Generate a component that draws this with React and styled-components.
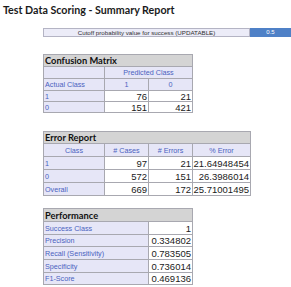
import React from 'react';
import styled, { createGlobalStyle } from 'styled-components';

const GlobalStyle = createGlobalStyle`
    body {
        margin: 0;
        background: #ffffff;
        font-family: Lato, 'Liberation Sans', sans-serif;
    }
`;

const report = {
    cutoff: 0.5,
    confusion: [
        ['1', 76, 21],
        ['0', 151, 421],
    ],
    errors: [
        ['1', 97, 21, '21.64948454'],
        ['0', 572, 151, '26.3986014'],
        ['Overall', 669, 172, '25.71001495'],
    ],
    performance: [
        ['Success Class', '1'],
        ['Precision', '0.334802'],
        ['Recall (Sensitivity)', '0.783505'],
        ['Specificity', '0.736014'],
        ['F1-Score', '0.469136'],
    ],
};

const App = () => {
    return (
        <Page>
            <GlobalStyle />
            <Title>Test Data Scoring - Summary Report</Title>
            <Body>
                <CutoffBar>
                    <CutoffLabel>Cutoff probability value for success (UPDATABLE)</CutoffLabel>
                    <CutoffValue>{report.cutoff}</CutoffValue>
                </CutoffBar>

                <Grid $top={17} $cols="61px 44px 44px" $rows="12px 12px 12px 11px 11px">
                    <Caption>Confusion Matrix</Caption>
                    <Label />
                    <ColHead $span={2}>Predicted Class</ColHead>
                    <Label>Actual Class</Label>
                    <ColHead>1</ColHead>
                    <ColHead>0</ColHead>
                    {report.confusion.map((r) => (
                        <React.Fragment key={r[0]}>
                            <Label>{r[0]}</Label>
                            <Value>{r[1]}</Value>
                            <Value>{r[2]}</Value>
                        </React.Fragment>
                    ))}
                </Grid>

                <Grid $top={18} $cols="61px 44px 44px 58px" $rows="12px 13px 13px 13px 13px">
                    <Caption>Error Report</Caption>
                    <ColHead>Class</ColHead>
                    <ColHead># Cases</ColHead>
                    <ColHead># Errors</ColHead>
                    <ColHead>% Error</ColHead>
                    {report.errors.map((r) => (
                        <React.Fragment key={r[0]}>
                            <Label>{r[0]}</Label>
                            <Value>{r[1]}</Value>
                            <Value>{r[2]}</Value>
                            <Value>{r[3]}</Value>
                        </React.Fragment>
                    ))}
                </Grid>

                <Grid $top={12} $cols="105px 44px" $rows="13px 13px 12px 13px 13px 12px">
                    <Caption>Performance</Caption>
                    {report.performance.map((r) => (
                        <React.Fragment key={r[0]}>
                            <Label>{r[0]}</Label>
                            <Value>{r[1]}</Value>
                        </React.Fragment>
                    ))}
                </Grid>
            </Body>
        </Page>
    );
};

const Page = styled.div`
    width: 291px;
    height: 287px;
    padding: 3px 0 0 3px;
    box-sizing: border-box;
    overflow: hidden;
`;

const Title = styled.div`
    font-family: Lato, 'Liberation Sans', sans-serif;
    font-weight: 700;
    font-size: 10.7px;
    line-height: 13px;
    color: #1a1a1a;
`;

const Body = styled.div`
    display: flex;
    flex-direction: column;
    align-items: flex-start;
    margin: 12px 0 0 40px;
`;

const CutoffBar = styled.div`
    display: flex;
    height: 9px;
    width: 248px;
`;

const CutoffLabel = styled.div`
    width: 207px;
    box-sizing: border-box;
    border: 1px solid #b4b4c4;
    background: #ececf8;
    font-family: 'Liberation Sans', sans-serif;
    font-size: 6.2px;
    line-height: 7px;
    text-align: center;
    color: #303030;
`;

const CutoffValue = styled.div`
    flex: 1;
    background: #4f81c7;
    color: #ffffff;
    font-family: 'Liberation Sans', sans-serif;
    font-size: 6px;
    line-height: 9px;
    text-align: center;
`;

const Grid = styled.div`
    display: grid;
    margin-top: ${(p) => p.$top}px;
    grid-template-columns: ${(p) => p.$cols};
    grid-template-rows: ${(p) => p.$rows};
    border-top: 1px solid #a8a8b0;
    border-left: 1px solid #a8a8b0;
    font-family: 'Liberation Sans', sans-serif;
`;

const Cell = styled.div`
    display: flex;
    align-items: center;
    box-sizing: border-box;
    border-right: 1px solid #a8a8b0;
    border-bottom: 1px solid #a8a8b0;
    padding: 0 1px;
    white-space: nowrap;
    overflow: hidden;
`;

const Caption = styled(Cell)`
    grid-column: 1 / -1;
    background: #d4d4d4;
    font-family: Lato, 'Liberation Sans', sans-serif;
    font-weight: 700;
    font-size: 9.3px;
    color: #111111;
`;

const Label = styled(Cell)`
    background: #e6e6f7;
    color: #4a62c0;
    font-size: 7.2px;
`;

const ColHead = styled(Label)`
    grid-column: span ${(p) => p.$span || 1};
    justify-content: center;
`;

const Value = styled(Cell)`
    justify-content: flex-end;
    background: #ffffff;
    color: #1a1a1a;
    font-size: 9.5px;
`;

export default App;
